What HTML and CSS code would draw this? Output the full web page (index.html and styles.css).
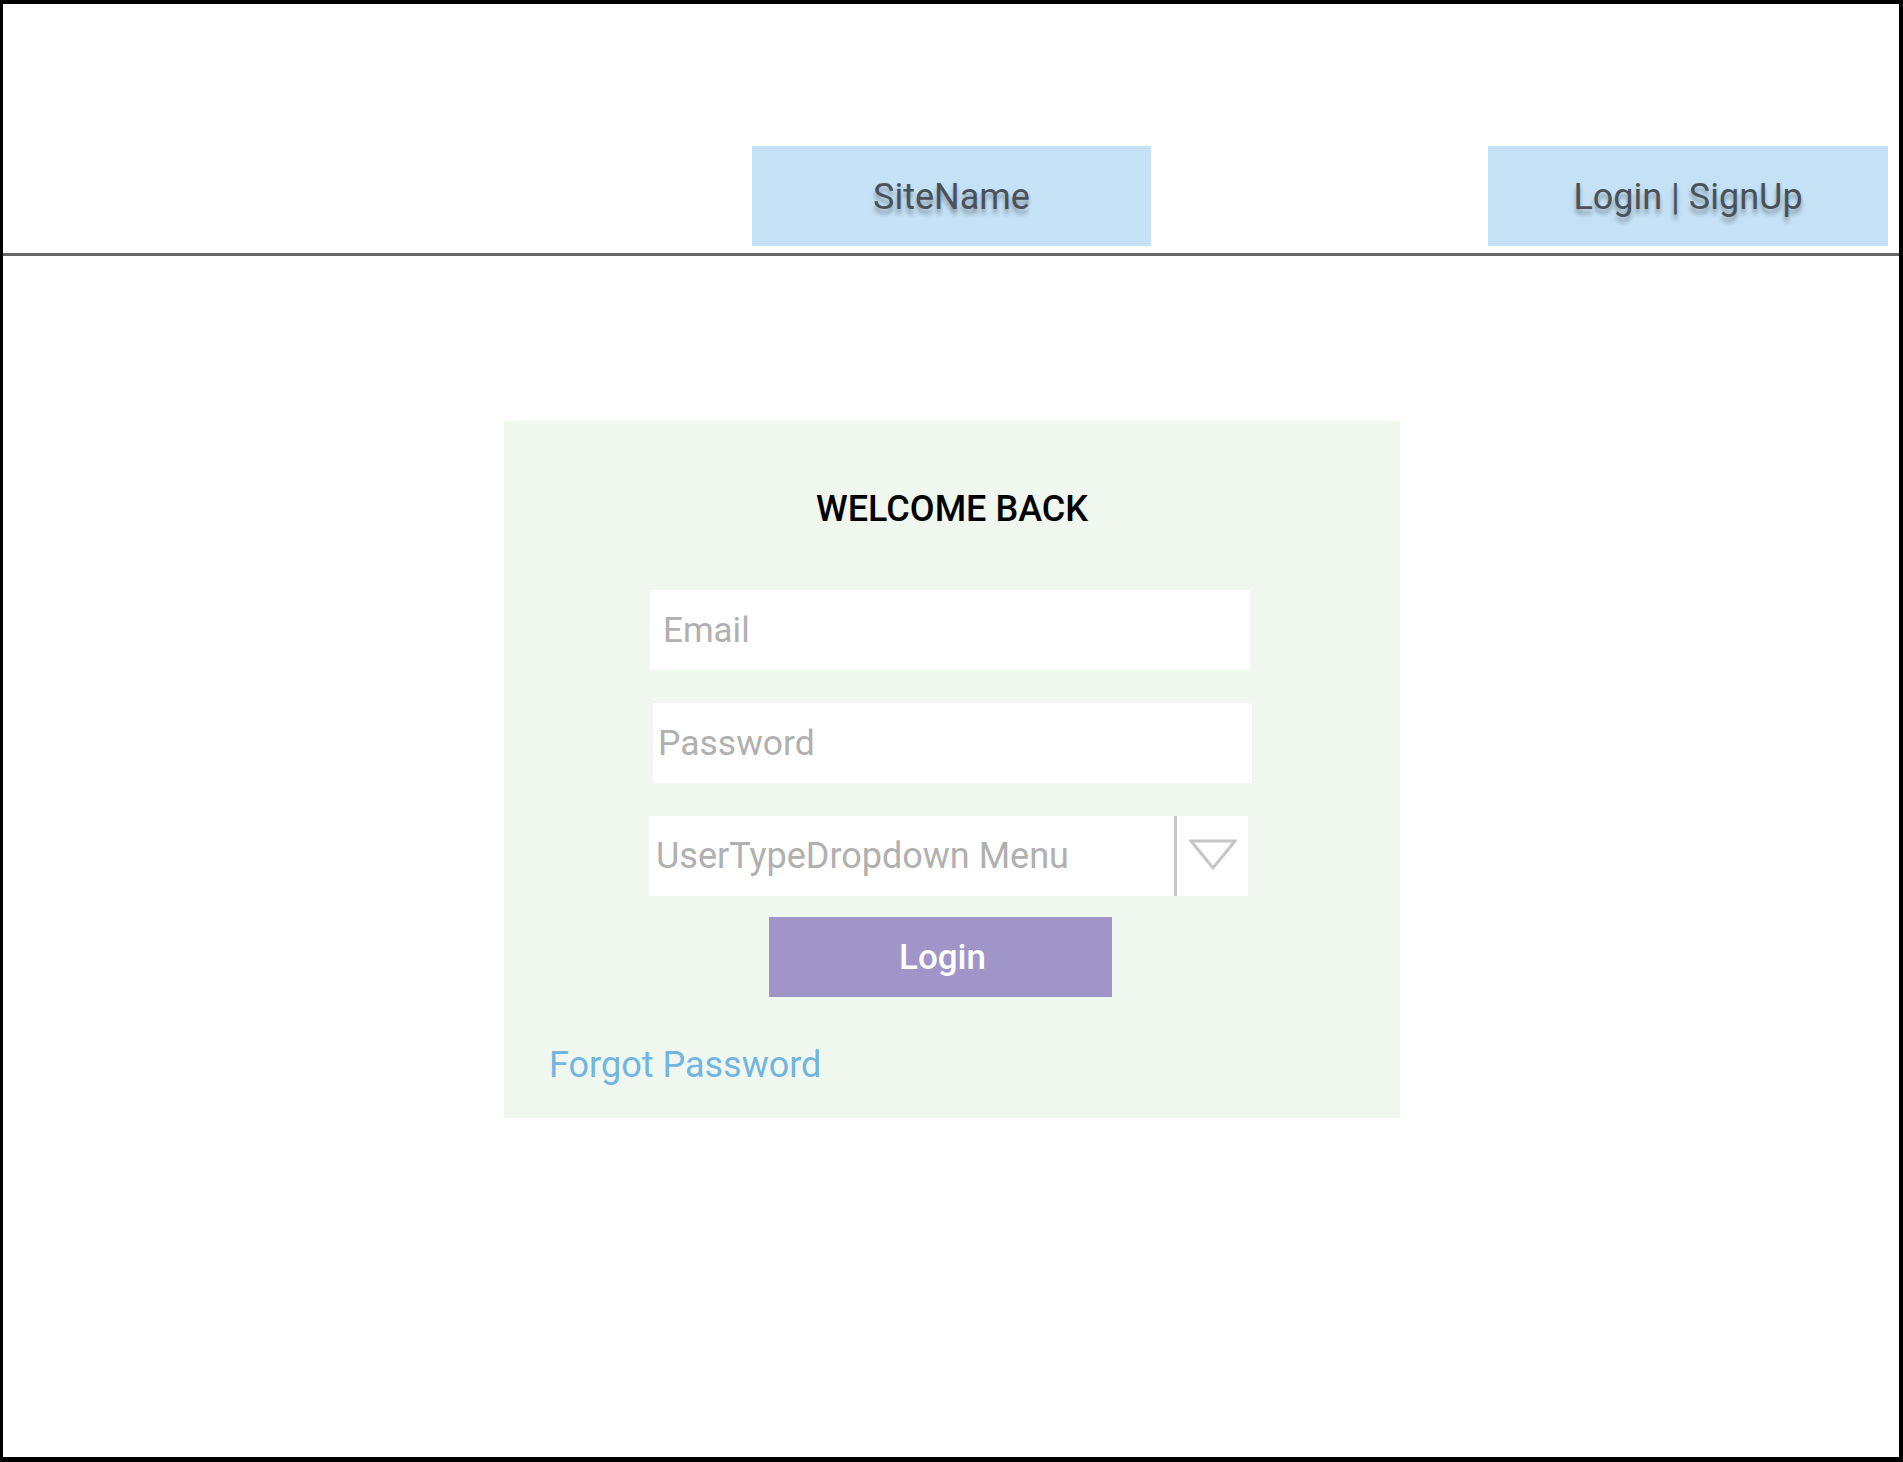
FILE: index.html
```html
<!DOCTYPE html>
<html lang="en">
<head>
<meta charset="utf-8">
<title>Login</title>
<link rel="stylesheet" href="styles.css">
</head>
<body>
<div class="frame">
  <header class="topbar">
    <div class="nav-box site-name">SiteName</div>
    <div class="nav-box auth-links">Login | SignUp</div>
  </header>
  <main class="content">
    <section class="card">
      <h1 class="card-title">WELCOME BACK</h1>
      <input class="field field-email" type="text" placeholder="Email">
      <input class="field field-password" type="password" placeholder="Password">
      <div class="dropdown">
        <span class="dropdown-label">UserTypeDropdown Menu</span>
        <span class="dropdown-divider"></span>
        <span class="dropdown-arrow">
          <svg width="48" height="31" viewBox="0 0 48 31">
            <path d="M2 2 L46 2 L24 29 Z" fill="none" stroke="#c6c6c6" stroke-width="3" stroke-linejoin="miter"/>
          </svg>
        </span>
      </div>
      <button class="login-btn" type="button">Login</button>
      <a class="forgot" href="#">Forgot Password</a>
    </section>
  </main>
</div>
</body>
</html>
```

FILE: styles.css
```css
* {
  box-sizing: border-box;
}

html, body {
  margin: 0;
  padding: 0;
  background: #ffffff;
}

body {
  font-family: Roboto, "Liberation Sans", Arial, sans-serif;
}

.frame {
  width: 1903px;
  height: 1462px;
  border-style: solid;
  border-color: #000000;
  border-width: 4px 4px 5px 3px;
  background: #ffffff;
  overflow: hidden;
}

.topbar {
  display: flex;
  align-items: flex-start;
  gap: 337px;
  padding: 142px 0 7px 749px;
  border-bottom: 3px solid #666666;
}

.nav-box {
  height: 100px;
  background: #c5e1f5;
  display: flex;
  align-items: center;
  justify-content: center;
  font-size: 36px;
  color: #4a5159;
  text-shadow: 0 5px 4px rgba(0, 0, 0, 0.32);
  padding-top: 2px;
}

.site-name {
  width: 399px;
}

.auth-links {
  width: 400px;
}

.content {
  padding: 165px 0 0 501px;
}

.card {
  width: 896px;
  height: 697px;
  background: #f0f7ee;
  display: flex;
  flex-direction: column;
  padding-top: 70px;
}

.card-title {
  margin: 0;
  height: 36px;
  font-size: 36px;
  line-height: 36px;
  font-weight: 500;
  color: #000000;
  text-align: center;
  padding-left: 0;
}

.field {
  display: block;
  width: 600px;
  height: 80px;
  border: none;
  outline: none;
  background: #ffffff;
  font-family: Roboto, "Liberation Sans", Arial, sans-serif;
  font-size: 35px;
  color: #555555;
  padding: 0;
}

.field::placeholder {
  color: #b0b0b0;
}

.field-email {
  margin: 63px 0 0 146px;
  padding-left: 13px;
}

.field-password {
  width: 599px;
  margin: 33px 0 0 149px;
  padding-left: 5px;
  font-size: 35.5px;
}

.dropdown {
  margin: 33px 0 0 145px;
  width: 599px;
  height: 80px;
  background: #ffffff;
  display: flex;
  align-items: stretch;
}

.dropdown-label {
  flex: 1;
  display: flex;
  align-items: center;
  padding-left: 7px;
  font-size: 36px;
  color: #b0b0b0;
}

.dropdown-divider {
  width: 3px;
  background: #c8c8c8;
}

.dropdown-arrow {
  width: 71px;
  display: flex;
  align-items: center;
  justify-content: center;
  padding-bottom: 3px;
}

.dropdown-arrow svg {
  display: block;
}

.login-btn {
  margin: 21px 0 0 265px;
  width: 343px;
  height: 80px;
  border: none;
  background: #9f95c8;
  color: #ffffff;
  font-family: Roboto, "Liberation Sans", Arial, sans-serif;
  font-size: 35px;
  font-weight: 500;
  padding: 0 0 0 4px;
  cursor: pointer;
}

.forgot {
  margin: 51px 0 0 45px;
  align-self: flex-start;
  font-size: 36px;
  line-height: 34px;
  color: #72b5e0;
  text-decoration: none;
}
```
